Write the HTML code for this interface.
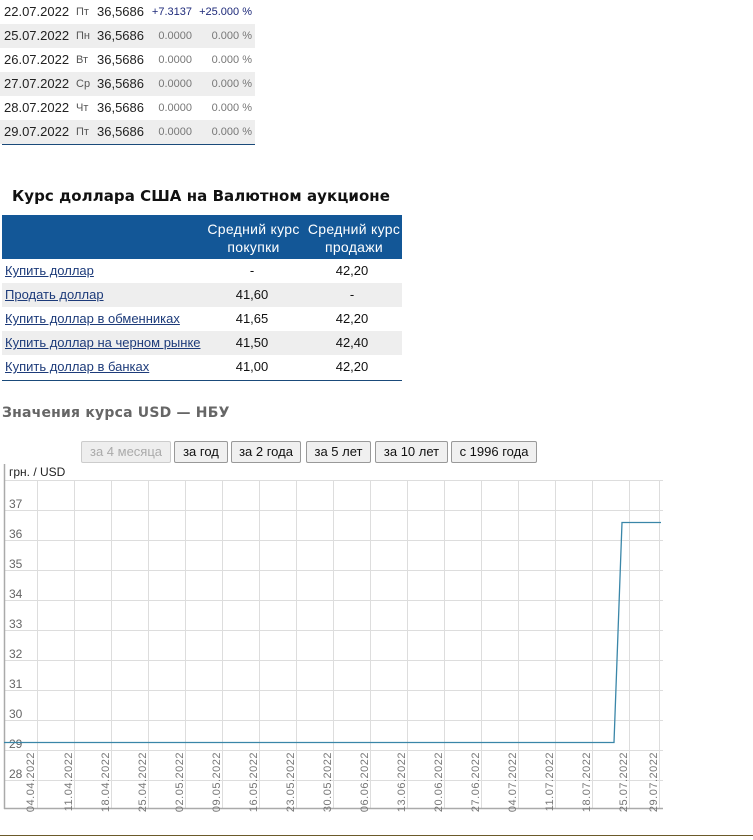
<!DOCTYPE html>
<html><head><meta charset="utf-8"><style>
body{margin:0;background:#fff;width:753px;height:840px;position:relative;overflow:hidden;font-family:"Liberation Sans",Arial,sans-serif;}
.a{position:absolute;white-space:nowrap}
.r{position:absolute;left:0;width:255px;height:24px;font-size:13px;color:#222}
.r span{position:absolute;top:4px}
.g{background:#eee}
.d{left:4px}.w{left:76px;font-size:11px;color:#555;top:6px!important}.v{left:97px}
.c{right:63px;font-size:11px;color:#777;top:6px!important}.p{right:3px;font-size:11px;color:#777;top:6px!important}
.blue .c,.blue .p{color:#1e2a7a}
.t{position:absolute;left:2px;width:400px;height:24px;font-size:13px;color:#111}
.t a{position:absolute;left:3px;top:4px;color:#1d3b7a;text-decoration:underline}
.t .x{position:absolute;top:4px;width:100px;text-align:center}
.btn{position:absolute;top:441px;height:20px;border:1px solid #999;border-radius:2px;background:#f0f0f0;font-size:13px;color:#111;text-align:center;line-height:20px}
</style></head><body>
<div class="r blue" style="top:0"><span class="d">22.07.2022</span><span class="w">Пт</span><span class="v">36,5686</span><span class="c">+7.3137</span><span class="p">+25.000 %</span></div>
<div class="r g" style="top:24px"><span class="d">25.07.2022</span><span class="w">Пн</span><span class="v">36,5686</span><span class="c">0.0000</span><span class="p">0.000 %</span></div>
<div class="r" style="top:48px"><span class="d">26.07.2022</span><span class="w">Вт</span><span class="v">36,5686</span><span class="c">0.0000</span><span class="p">0.000 %</span></div>
<div class="r g" style="top:72px"><span class="d">27.07.2022</span><span class="w">Ср</span><span class="v">36,5686</span><span class="c">0.0000</span><span class="p">0.000 %</span></div>
<div class="r" style="top:96px"><span class="d">28.07.2022</span><span class="w">Чт</span><span class="v">36,5686</span><span class="c">0.0000</span><span class="p">0.000 %</span></div>
<div class="r g" style="top:120px"><span class="d">29.07.2022</span><span class="w">Пт</span><span class="v">36,5686</span><span class="c">0.0000</span><span class="p">0.000 %</span></div>
<div class="a" style="top:144px;left:2px;width:253px;border-top:1px solid #1a4a7a"></div>

<div class="a" style="top:187px;left:12px;font-family:'DejaVu Sans',Verdana,sans-serif;font-weight:bold;font-size:15px;letter-spacing:0.05px;color:#111">Курс доллара США на Валютном аукционе</div>
<div class="a" style="top:215px;left:2px;width:400px;height:44px;background:#135797;color:#fff;font-size:14px;letter-spacing:0.3px">
<div class="a" style="left:200px;top:5px;width:103px;text-align:center;line-height:18px">Средний курс<br>покупки</div>
<div class="a" style="left:302px;top:5px;width:100px;text-align:center;line-height:18px">Средний курс<br>продажи</div></div>
<div class="t" style="top:259px"><a>Купить доллар</a><span class="x" style="left:200px">-</span><span class="x" style="left:300px">42,20</span></div>
<div class="t g" style="top:283px"><a>Продать доллар</a><span class="x" style="left:200px">41,60</span><span class="x" style="left:300px">-</span></div>
<div class="t" style="top:307px"><a>Купить доллар в обменниках</a><span class="x" style="left:200px">41,65</span><span class="x" style="left:300px">42,20</span></div>
<div class="t g" style="top:331px"><a>Купить доллар на черном рынке</a><span class="x" style="left:200px">41,50</span><span class="x" style="left:300px">42,40</span></div>
<div class="t" style="top:355px"><a>Купить доллар в банках</a><span class="x" style="left:200px">41,00</span><span class="x" style="left:300px">42,20</span></div>
<div class="a" style="top:380px;left:2px;width:400px;border-top:1px solid #1a4a7a"></div>

<div class="a" style="top:405px;left:2px;font-family:'DejaVu Sans',Verdana,sans-serif;font-weight:bold;font-size:14px;letter-spacing:0.2px;color:#666">Значения курса USD — НБУ</div>
<div class="btn" style="left:81px;width:88px;color:#aaa;border-color:#ccc;background:#eee">за 4 месяца</div>
<div class="btn" style="left:174px;width:52px">за год</div>
<div class="btn" style="left:231px;width:68px">за 2 года</div>
<div class="btn" style="left:306px;width:63px">за 5 лет</div>
<div class="btn" style="left:375px;width:71px">за 10 лет</div>
<div class="btn" style="left:451px;width:84px">с 1996 года</div>

<svg class="a" style="left:0;top:460px" width="753" height="360" viewBox="0 460 753 360">
<g stroke="#ddd" stroke-width="1">
<line x1="4" y1="480.5" x2="663" y2="480.5"/><line x1="4" y1="510.5" x2="663" y2="510.5"/><line x1="4" y1="540.5" x2="663" y2="540.5"/><line x1="4" y1="570.5" x2="663" y2="570.5"/><line x1="4" y1="600.5" x2="663" y2="600.5"/><line x1="4" y1="630.5" x2="663" y2="630.5"/><line x1="4" y1="660.5" x2="663" y2="660.5"/><line x1="4" y1="690.5" x2="663" y2="690.5"/><line x1="4" y1="720.5" x2="663" y2="720.5"/><line x1="4" y1="750.5" x2="663" y2="750.5"/><line x1="4" y1="780.5" x2="663" y2="780.5"/>
<line x1="37.5" y1="480" x2="37.5" y2="808"/><line x1="74.5" y1="480" x2="74.5" y2="808"/><line x1="111.5" y1="480" x2="111.5" y2="808"/><line x1="148.5" y1="480" x2="148.5" y2="808"/><line x1="185.5" y1="480" x2="185.5" y2="808"/><line x1="222.5" y1="480" x2="222.5" y2="808"/><line x1="259.5" y1="480" x2="259.5" y2="808"/><line x1="296.5" y1="480" x2="296.5" y2="808"/><line x1="333.5" y1="480" x2="333.5" y2="808"/><line x1="370.5" y1="480" x2="370.5" y2="808"/><line x1="407.5" y1="480" x2="407.5" y2="808"/><line x1="444.5" y1="480" x2="444.5" y2="808"/><line x1="481.5" y1="480" x2="481.5" y2="808"/><line x1="518.5" y1="480" x2="518.5" y2="808"/><line x1="555.5" y1="480" x2="555.5" y2="808"/><line x1="592.5" y1="480" x2="592.5" y2="808"/><line x1="629.5" y1="480" x2="629.5" y2="808"/><line x1="659.5" y1="480" x2="659.5" y2="808"/>
</g>
<line x1="4.5" y1="464" x2="4.5" y2="809" stroke="#aaa" stroke-width="1.5"/>
<line x1="4" y1="808.5" x2="663" y2="808.5" stroke="#aaa" stroke-width="1.5"/>
<text x="9" y="476" font-size="12" fill="#222" font-family="Liberation Sans,sans-serif">грн. / USD</text>
<g font-size="12" fill="#666" font-family="Liberation Sans,sans-serif">
<text x="9" y="508">37</text><text x="9" y="538">36</text><text x="9" y="568">35</text><text x="9" y="598">34</text><text x="9" y="628">33</text><text x="9" y="658">32</text><text x="9" y="688">31</text><text x="9" y="718">30</text><text x="9" y="748">29</text><text x="9" y="778">28</text>
</g>
<polyline points="4,742.5 614,742.5 622,522.5 661,522.5" fill="none" stroke="#3a86a8" stroke-width="1.3"/>
<g font-size="11" fill="#777" font-family="Liberation Sans,sans-serif" letter-spacing="0.5" text-anchor="end">
<text transform="translate(34,752) rotate(-90)">04.04.2022</text>
<text transform="translate(72,752) rotate(-90)">11.04.2022</text>
<text transform="translate(109,752) rotate(-90)">18.04.2022</text>
<text transform="translate(146,752) rotate(-90)">25.04.2022</text>
<text transform="translate(183,752) rotate(-90)">02.05.2022</text>
<text transform="translate(220,752) rotate(-90)">09.05.2022</text>
<text transform="translate(257,752) rotate(-90)">16.05.2022</text>
<text transform="translate(294,752) rotate(-90)">23.05.2022</text>
<text transform="translate(331,752) rotate(-90)">30.05.2022</text>
<text transform="translate(368,752) rotate(-90)">06.06.2022</text>
<text transform="translate(405,752) rotate(-90)">13.06.2022</text>
<text transform="translate(442,752) rotate(-90)">20.06.2022</text>
<text transform="translate(479,752) rotate(-90)">27.06.2022</text>
<text transform="translate(516,752) rotate(-90)">04.07.2022</text>
<text transform="translate(553,752) rotate(-90)">11.07.2022</text>
<text transform="translate(590,752) rotate(-90)">18.07.2022</text>
<text transform="translate(627,752) rotate(-90)">25.07.2022</text>
<text transform="translate(657,752) rotate(-90)">29.07.2022</text>
</g>
</svg>
<div class="a" style="top:835px;left:0;width:753px;border-top:1px solid #6b5a2a"></div>
</body></html>
